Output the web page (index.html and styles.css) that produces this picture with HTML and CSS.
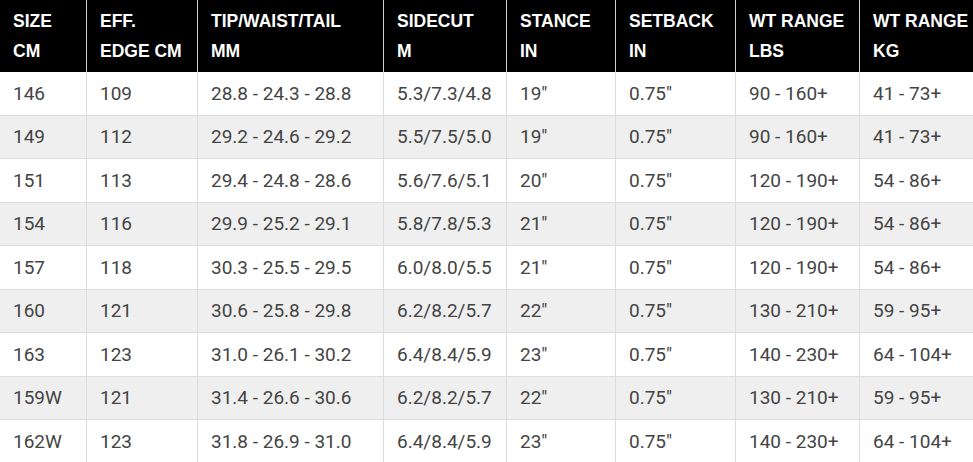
FILE: index.html
```html
<!DOCTYPE html>
<html lang="en">
<head>
<meta charset="utf-8">
<title>Size chart</title>
<link rel="stylesheet" href="styles.css">
</head>
<body>
<table class="specs">
  <colgroup>
    <col class="c1"><col class="c2"><col class="c3"><col class="c4"><col class="c5"><col class="c6"><col class="c7"><col class="c8">
  </colgroup>
  <thead>
    <tr>
      <th>SIZE<br>CM</th>
      <th>EFF.<br>EDGE CM</th>
      <th>TIP/WAIST/TAIL<br>MM</th>
      <th>SIDECUT<br>M</th>
      <th>STANCE<br>IN</th>
      <th>SETBACK<br>IN</th>
      <th>WT RANGE<br>LBS</th>
      <th>WT RANGE<br>KG</th>
    </tr>
  </thead>
  <tbody>
    <tr><td>146</td><td>109</td><td>28.8 - 24.3 - 28.8</td><td>5.3/7.3/4.8</td><td>19"</td><td>0.75"</td><td>90 - 160+</td><td>41 - 73+</td></tr>
    <tr><td>149</td><td>112</td><td>29.2 - 24.6 - 29.2</td><td>5.5/7.5/5.0</td><td>19"</td><td>0.75"</td><td>90 - 160+</td><td>41 - 73+</td></tr>
    <tr><td>151</td><td>113</td><td>29.4 - 24.8 - 28.6</td><td>5.6/7.6/5.1</td><td>20"</td><td>0.75"</td><td>120 - 190+</td><td>54 - 86+</td></tr>
    <tr><td>154</td><td>116</td><td>29.9 - 25.2 - 29.1</td><td>5.8/7.8/5.3</td><td>21"</td><td>0.75"</td><td>120 - 190+</td><td>54 - 86+</td></tr>
    <tr><td>157</td><td>118</td><td>30.3 - 25.5 - 29.5</td><td>6.0/8.0/5.5</td><td>21"</td><td>0.75"</td><td>120 - 190+</td><td>54 - 86+</td></tr>
    <tr><td>160</td><td>121</td><td>30.6 - 25.8 - 29.8</td><td>6.2/8.2/5.7</td><td>22"</td><td>0.75"</td><td>130 - 210+</td><td>59 - 95+</td></tr>
    <tr><td>163</td><td>123</td><td>31.0 - 26.1 - 30.2</td><td>6.4/8.4/5.9</td><td>23"</td><td>0.75"</td><td>140 - 230+</td><td>64 - 104+</td></tr>
    <tr><td>159W</td><td>121</td><td>31.4 - 26.6 - 30.6</td><td>6.2/8.2/5.7</td><td>22"</td><td>0.75"</td><td>130 - 210+</td><td>59 - 95+</td></tr>
    <tr><td>162W</td><td>123</td><td>31.8 - 26.9 - 31.0</td><td>6.4/8.4/5.9</td><td>23"</td><td>0.75"</td><td>140 - 230+</td><td>64 - 104+</td></tr>
  </tbody>
</table>
</body>
</html>
```

FILE: styles.css
```css
html, body {
  margin: 0;
  padding: 0;
  background: #ffffff;
  overflow: hidden;
}

.specs {
  table-layout: fixed;
  width: 973px;
  border-collapse: separate;
  border-spacing: 0;
}

.specs .c1 { width: 86px; }
.specs .c2 { width: 111px; }
.specs .c3 { width: 186px; }
.specs .c4 { width: 123px; }
.specs .c5 { width: 109px; }
.specs .c6 { width: 120px; }
.specs .c7 { width: 124px; }
.specs .c8 { width: 114px; }

.specs th,
.specs td {
  box-sizing: border-box;
  text-align: left;
  vertical-align: middle;
  white-space: nowrap;
  overflow: hidden;
}

.specs th {
  background: #000000;
  color: #ffffff;
  font-family: "Liberation Sans", Arial, sans-serif;
  font-weight: bold;
  font-size: 17.5px;
  line-height: 30px;
  height: 72px;
  padding: 6px 0 6px 13px;
  border-left: 1px solid #cfcfcf;
}

.specs td {
  color: #444444;
  font-family: "Liberation Sans Narrow", "Arial Narrow", "Roboto", sans-serif;
  font-size: 19px;
  line-height: 24px;
  height: 43.5px;
  padding: 1px 0 0 13px;
  border-left: 1px solid #dcdcdc;
  border-bottom: 1px solid #dcdcdc;
}

.specs th:first-child,
.specs td:first-child {
  border-left: none;
}

.specs tbody tr:nth-child(even) td {
  background: #efefef;
}
```
